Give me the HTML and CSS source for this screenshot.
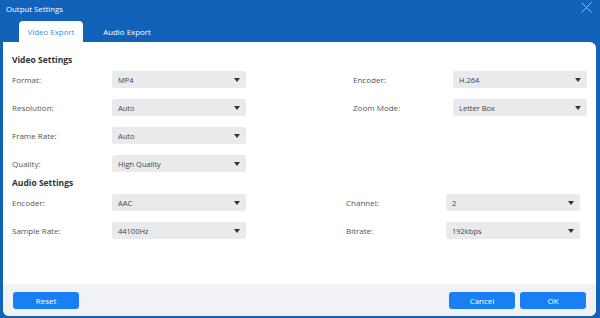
FILE: index.html
```html
<!DOCTYPE html>
<html>
<head>
<meta charset="utf-8">
<link rel="stylesheet" href="styles.css">
</head>
<body>
<div class="window">
  <div class="titlebar">
    <span class="title">Output Settings</span>
    <svg class="close" width="11" height="11" viewBox="0 0 11 11"><path d="M0.5 0.5L10.5 10.5M10.5 0.5L0.5 10.5" stroke="#9dbde6" stroke-width="1" fill="none"/></svg>
  </div>
  <div class="tabs">
    <div class="tab active">Video Export</div>
    <div class="tab">Audio Export</div>
  </div>
  <div class="panel">
    <div class="content">
      <div class="section-title">Video Settings</div>
      <div class="grid video">
        <div class="label">Format:</div>
        <div class="select"><span>MP4</span><i class="arrow"></i></div>
        <div></div>
        <div class="label">Encoder:</div>
        <div class="select"><span>H.264</span><i class="arrow"></i></div>

        <div class="label">Resolution:</div>
        <div class="select"><span>Auto</span><i class="arrow"></i></div>
        <div></div>
        <div class="label">Zoom Mode:</div>
        <div class="select"><span>Letter Box</span><i class="arrow"></i></div>

        <div class="label">Frame Rate:</div>
        <div class="select"><span>Auto</span><i class="arrow"></i></div>
        <div></div><div></div><div></div>

        <div class="label">Quality:</div>
        <div class="select"><span>High Quality</span><i class="arrow"></i></div>
        <div></div><div></div><div></div>
      </div>
      <div class="section-title">Audio Settings</div>
      <div class="grid audio">
        <div class="label">Encoder:</div>
        <div class="select"><span>AAC</span><i class="arrow"></i></div>
        <div></div>
        <div class="label">Channel:</div>
        <div class="select"><span>2</span><i class="arrow"></i></div>

        <div class="label">Sample Rate:</div>
        <div class="select"><span>44100Hz</span><i class="arrow"></i></div>
        <div></div>
        <div class="label">Bitrate:</div>
        <div class="select"><span>192kbps</span><i class="arrow"></i></div>
      </div>
    </div>
    <div class="footer">
      <button class="btn">Reset</button>
      <div class="spacer"></div>
      <button class="btn">Cancel</button>
      <button class="btn">OK</button>
    </div>
  </div>
</div>
</body>
</html>
```
FILE: styles.css
```css
html, body {
  margin: 0;
  padding: 0;
}
body {
  width: 600px;
  height: 318px;
  background: #1262b9;
  font-family: "Open Sans", "Noto Sans", sans-serif;
  overflow: hidden;
}
.window {
  display: flex;
  flex-direction: column;
  height: 318px;
}
.titlebar {
  height: 21px;
  display: flex;
  align-items: center;
  justify-content: space-between;
  padding: 0 8px 0 6px;
}
.title {
  color: #ffffff;
  font-size: 7.8px;
  line-height: 12px;
  margin-top: -4px;
}
.close {
  margin-top: -6px;
}
.tabs {
  height: 21px;
  display: flex;
  padding-left: 19px;
}
.tab {
  width: 64px;
  height: 21px;
  display: flex;
  align-items: center;
  justify-content: center;
  font-size: 7.9px;
  color: #ffffff;
  border-radius: 4px 4px 0 0;
  margin-right: 12px;
}
.tab.active {
  background: #ffffff;
  color: #3d8fe6;
}
.panel {
  margin: 0 4px 0 3px;
  height: 274px;
  background: #ffffff;
  border-radius: 0 6px 6px 6px;
  display: flex;
  flex-direction: column;
  overflow: hidden;
}
.content {
  flex: 1;
  padding: 12px 0 0 9px;
}
.section-title {
  font-size: 8.5px;
  font-weight: 700;
  color: #333333;
  line-height: 12px;
  height: 12px;
  margin-bottom: 5px;
}
.grid {
  display: grid;
  grid-auto-rows: 17px;
  row-gap: 11px;
  margin-bottom: 5px;
}
.grid.video {
  grid-template-columns: 100px 134px 107px 100px 134px;
}
.grid.audio {
  grid-template-columns: 100px 134px 100px 100px 134px;
}
.label {
  font-size: 8px;
  color: #555555;
  display: flex;
  align-items: center;
}
.select {
  background: #e9eaec;
  border-radius: 2px;
  display: flex;
  align-items: center;
  justify-content: space-between;
  padding: 0 6px 0 6px;
  font-size: 7.5px;
  color: #444444;
}
.arrow {
  width: 0;
  height: 0;
  border-left: 3px solid transparent;
  border-right: 3px solid transparent;
  border-top: 4px solid #333333;
}
.footer {
  height: 32px;
  background: #f1f2f5;
  display: flex;
  align-items: flex-start;
  padding: 8px 10px 0 10px;
  box-sizing: border-box;
}
.spacer {
  flex: 1;
}
.btn {
  width: 66px;
  height: 17px;
  border: none;
  border-radius: 3px;
  background: #1a7ef4;
  color: #ffffff;
  font-family: "Open Sans", "Noto Sans", sans-serif;
  font-size: 8px;
  padding: 0;
  margin-left: 5px;
}
.btn:first-child {
  margin-left: 0;
}
```
